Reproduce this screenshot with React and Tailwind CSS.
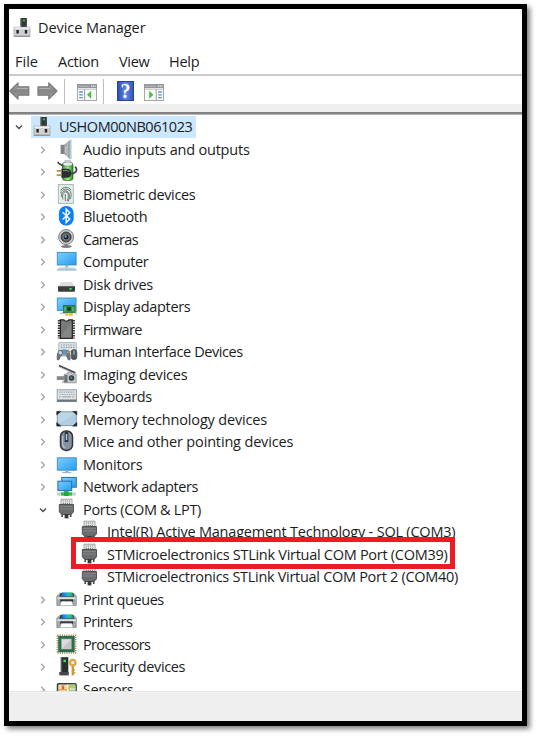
import React from 'react';

function Svg({ children, className = '' }) {
  return (
    <svg viewBox="0 0 22 22" className={`h-[22px] w-[22px] shrink-0 overflow-visible ${className}`}>
      {children}
    </svg>
  );
}

function Gradients() {
  return (
    <svg className="absolute h-0 w-0">
      <defs>
        <linearGradient id="screen" x1="0" y1="0" x2="1" y2="1">
          <stop offset="0" stopColor="#7cd0ff" />
          <stop offset="1" stopColor="#269cf0" />
        </linearGradient>
        <linearGradient id="steel" x1="0" y1="0" x2="1" y2="0">
          <stop offset="0" stopColor="#8b9196" />
          <stop offset="0.6" stopColor="#b9bec2" />
          <stop offset="1" stopColor="#6c7276" />
        </linearGradient>
        <linearGradient id="battery" x1="0" y1="0" x2="1" y2="0">
          <stop offset="0" stopColor="#2e9b22" />
          <stop offset="0.5" stopColor="#a5f07c" />
          <stop offset="1" stopColor="#238a1c" />
        </linearGradient>
        <linearGradient id="printBlue" x1="0" y1="0" x2="1" y2="0">
          <stop offset="0" stopColor="#1565d8" />
          <stop offset="0.5" stopColor="#16b6e8" />
          <stop offset="0.75" stopColor="#35c746" />
          <stop offset="1" stopColor="#1e7fe0" />
        </linearGradient>
        <linearGradient id="arrow" x1="0" y1="0" x2="0" y2="1">
          <stop offset="0" stopColor="#a9a9a9" />
          <stop offset="0.5" stopColor="#858585" />
          <stop offset="1" stopColor="#a3a3a3" />
        </linearGradient>
      </defs>
    </svg>
  );
}

const Computer = () => (
  <Svg>
    <path d="M9.3 1h6.4v9.7H9.3z" fill="#55595c" />
    <path d="M10.8 1h4.9v9.7h-4.9z" fill="#34383a" />
    <circle cx="13" cy="3.4" r="1.1" fill="#2fc52d" />
    <path d="M3 10.2h16v9.3H3z" fill="#d0d1d3" stroke="#9fa2a5" strokeWidth=".7" />
    <path d="M3.4 10.4h15.2v1.6H3.4z" fill="#f0f0f0" />
    <path d="M5.4 13h2.4v3.6H5.4zM13.8 13h2.4v3.6h-2.4z" fill="#242424" />
    <path d="M3 18.6h16v1.2H3z" fill="#8d9093" />
  </Svg>
);

const Audio = () => (
  <Svg>
    <path d="M4.6 5.8h4v9.2h-4z" fill="#7d8387" />
    <path d="M8.2 5.8 13.8 1v19l-5.6-5z" fill="url(#steel)" />
    <path d="M13.6.6h2v19.8h-2z" fill="#b3cddb" />
    <path d="M9.7 7.2v7" stroke="#d2d5d7" strokeWidth=".8" />
  </Svg>
);

const Battery = () => (
  <Svg>
    <path d="M8.8 -.4h5.6v3H8.8z" fill="#eef0f1" stroke="#9a9fa2" strokeWidth=".6" />
    <rect x="6.4" y="1.6" width="10.6" height="17.8" rx="2.6" fill="url(#battery)" stroke="#245c23" strokeWidth=".7" />
    <ellipse cx="11.7" cy="3" rx="4.8" ry="2.1" fill="#e6eeea" stroke="#59705c" strokeWidth=".5" />
    <path d="M2 .8C2 4 5.5 2.6 7 5.4M14.4 12.4c6.4.4 7.4-4.4 4.6-6.8" fill="none" stroke="#3c4144" strokeWidth="1.6" />
    <path d="M5.4 7.8h5c3.6 0 4.8 2 4.8 4.4 0 2.7-1.4 4.6-4.8 4.6h-5z" fill="#2b2e30" />
    <path d="M7 9.6h4c1.2 0 2 .6 2.4 1.4" stroke="#858b8f" fill="none" />
    <path d="M.7 9.8h4.8M.7 14.2h4.8" stroke="#b98f3a" strokeWidth="1.7" />
  </Svg>
);

const Biometric = () => (
  <Svg>
    <rect x="2.3" y=".6" width="15" height="18.8" fill="#e4eeeb" stroke="#9db5af" strokeWidth=".9" />
    <g fill="none" stroke="#636e6c" strokeWidth=".95">
      <path d="M4.8 6.3c2-4 8.2-4 10.2 0M4.6 9.2C5.7 3.8 14 3.8 15 9.2c.3 2 0 4-.8 5.8M5.4 12.8c-.4-8 8.6-8 8 0-.1 1.8-.5 3.3-1 4.6M7 15.4c-.8-2.8-.8-7.3 2.7-7.4 4 .2 2.7 6 1.4 9.3M9.3 10v7" />
    </g>
  </Svg>
);

const Bluetooth = () => (
  <Svg>
    <rect x="2.9" y="0" width="14.8" height="19.6" rx="7" fill="#0a80f5" />
    <path d="m6.6 6.2 7.2 6.8-3.6 3.5V3.2l3.6 3.5-7.2 6.7" fill="none" stroke="#fff" strokeWidth="1.4" />
  </Svg>
);

const Camera = () => (
  <Svg>
    <path d="M8.6 14h3v3.4h-3z" fill="#777" />
    <ellipse cx="10.2" cy="17.6" rx="5.3" ry="1.4" fill="#77797b" />
    <circle cx="10.1" cy="8" r="7.5" fill="#c9cbcd" stroke="#808284" />
    <circle cx="10.1" cy="8" r="5" fill="#5a5e61" stroke="#303336" strokeWidth=".9" />
    <circle cx="10.1" cy="8" r="3" fill="#1b222a" stroke="#8a929a" strokeWidth=".8" />
    <circle cx="9.6" cy="7.4" r="1.1" fill="#86b7de" />
  </Svg>
);

const Desktop = () => (
  <Svg>
    <rect x="1.3" y="1.4" width="18.8" height="12.6" fill="url(#screen)" stroke="#3f8abf" strokeWidth=".9" />
    <path d="M9.2 14.2h3v2.6h-3z" fill="#9fb3c0" />
    <path d="M3 16.6h15.5l2.2 2.6H.8z" fill="#bcd3e2" />
    <path d="M.8 19h20" stroke="#8fabbd" strokeWidth=".8" />
  </Svg>
);

const Disk = () => (
  <Svg>
    <path d="M5 8h11l2.8 4.6H2.2z" fill="#dcdddd" />
    <rect x="2" y="12" width="17" height="5.8" rx="1" fill="#393b3d" />
    <path d="M2.8 12.6h15.4" stroke="#6d7072" strokeWidth=".8" />
    <path d="M13.4 14h2.3v1.8h-2.3z" fill="#39e03b" />
  </Svg>
);

const Display = () => (
  <Svg>
    <rect x="1.3" y="2" width="18.8" height="12.4" fill="url(#screen)" stroke="#3f8abf" strokeWidth=".9" />
    <path d="M4 17.2h5" stroke="#a9bcc8" strokeWidth="1.2" />
    <rect x="7.6" y="9.4" width="12" height="7.4" fill="#2f9150" stroke="#175d30" strokeWidth=".6" />
    <path d="M11.2 11.2h3.7v3.5h-3.7z" fill="#173c28" />
    <path d="M9 11v4.3M17 11v4.3" stroke="#8bd39a" strokeWidth=".8" />
    <path d="M20.2 7.6v11" stroke="#b5bbbe" strokeWidth="1.1" />
    <path d="M9.4 17.2h7.4v2.5H9.4z" fill="#f1b62b" />
    <path d="M12.4 17v3" stroke="#fff" strokeWidth=".7" />
  </Svg>
);

const Firmware = () => (
  <Svg>
    <path d="M3.2 1v18.4M17.5 1v18.4" stroke="#373737" strokeWidth="2.8" strokeDasharray="1.6 .9" />
    <path d="M4.4.8h3.5c.5 1.8 4.4 1.8 5 0h3.4v18.5H4.4z" fill="#77797a" stroke="#272829" strokeWidth="1.3" />
    <path d="M5.2 17 15.4 4v14.4H5.2z" fill="#8d8f90" opacity=".6" />
  </Svg>
);

const Hid = () => (
  <Svg>
    <rect x="2.8" y="1.6" width="17.4" height="9" rx=".6" fill="#dfe4e7" stroke="#a3abb1" strokeWidth=".9" />
    <path d="M5 4h13.4M5 6.4h13.4" stroke="#8d979e" strokeWidth="1.1" strokeDasharray="1.4 1" />
    <path d="M3.2 9.2c2.4-.9 6.8-.9 9.2 0 1.6.9 2.2 5 2.1 8.6 0 2-2.2 2.2-3.1.3l-1.2-2.8H5l-1.2 2.8c-.9 1.9-3 1.6-3.1-.3-.1-3.4.7-7.7 2.5-8.6z" fill="#69737a" />
    <circle cx="4.3" cy="11.8" r="1.7" fill="#cfd7db" />
    <path d="M6.6 9.2h3.6v3.4H6.6z" fill="#37a6ee" />
    <circle cx="11.8" cy="11.4" r="1.2" fill="#f08a3c" />
    <path d="M6 14h4.4" stroke="#bac4ca" strokeWidth="1.2" />
    <rect x="15.2" y="8.6" width="5.6" height="10" rx="2.6" fill="#4d5a64" stroke="#333d45" strokeWidth=".6" />
    <path d="M18 9.6v4" stroke="#c6ced3" />
  </Svg>
);

const Imaging = () => (
  <Svg>
    <path d="M2.9 1.7 19.3 8.8" stroke="#484c4f" strokeWidth="2" />
    <path d="m3.5 2.8 14 6.4" stroke="#a6aaac" strokeWidth=".8" />
    <path d="M.8 12.2h8.5v3.8H.8z" fill="#85898b" />
    <path d="M6 17.8h13" stroke="#a7acae" strokeWidth="1.4" />
    <path d="M8.2 10.2h2.3l1-1.8h3.8l1 1.8h3.9v8.6h-12z" fill="#c2c4c5" stroke="#85898b" strokeWidth=".7" />
    <path d="M8.4 11h3v7.4h-3z" fill="#6d7274" />
    <circle cx="15.5" cy="14" r="2.7" fill="#33383b" />
    <circle cx="15.3" cy="13.8" r="1.2" fill="#38959f" />
  </Svg>
);

const Keyboard = () => (
  <Svg>
    <rect x="1.2" y="3.8" width="19.2" height="11.8" fill="#e2e6e8" stroke="#8d979e" strokeWidth=".9" />
    <path d="M1.2 13.5h19.2v2.2H1.2z" fill="#69747c" />
    <path d="M3 6.2h16M3.7 8.5h15M3 10.8h2.5M16.2 10.8H19" stroke="#9ca6ac" strokeWidth="1.2" strokeDasharray="1.5 .8" />
    <path d="M6.3 10.8h9" stroke="#9ca6ac" strokeWidth="1.2" />
  </Svg>
);

const Memory = () => (
  <Svg>
    <rect x="1.3" y="2.8" width="19" height="13.8" rx="1.2" fill="#bdd7e8" stroke="#8398a5" />
    <path d="M2 15.8 19.8 4v11.8z" fill="#a2c2d8" opacity=".5" />
    <path d="M.8 5.8V2.4h4zM16.8 2.4h4v3.4zM.8 13.6v3.5h4zM20.8 13.6v3.5h-4z" fill="#22282c" stroke="#22282c" strokeWidth=".7" />
  </Svg>
);

const Mouse = () => (
  <Svg>
    <rect x="4.5" y="0" width="12" height="19.4" rx="5.5" fill="#8591a0" stroke="#30353a" strokeWidth="1.5" />
    <path d="M6.6 5v8c0 2 1.2 3.4 2.6 3.9" fill="none" stroke="#b4bec8" strokeWidth="1.2" />
    <path d="M10.5.6v10.4" stroke="#30353a" strokeWidth="3.6" />
    <path d="M10.5 3v6" stroke="#a9c9e9" strokeWidth="1.5" />
  </Svg>
);

const Monitor = () => (
  <Svg>
    <rect x="1.3" y="3.8" width="19" height="12.4" fill="url(#screen)" stroke="#3f8abf" strokeWidth=".9" />
    <path d="M9.3 16.7h3v1.6h-3z" fill="#92adbe" />
    <path d="M6.3 18.6h9" stroke="#9db3c0" strokeWidth="1.1" />
  </Svg>
);

const Network = () => (
  <Svg>
    <rect x="5.8" y="1.4" width="14.5" height="9.8" fill="url(#screen)" stroke="#266ea7" />
    <rect x="1.9" y="5.2" width="13.8" height="9.4" fill="url(#screen)" stroke="#266ea7" />
    <path d="M1 18h18.8" stroke="#c6d0d4" strokeWidth="3.2" />
    <path d="M5 18h11" stroke="#35be45" strokeWidth="3.2" />
    <path d="M8 15.2h4.6v4.8H8z" fill="#20a838" />
  </Svg>
);

const Port = () => (
  <Svg>
    <path d="M5 .2h11v6H5z" fill="#efefef" stroke="#8b8d8e" strokeWidth=".8" />
    <path d="M6.6 2h8M6.6 4.3h8" stroke="#7c7f80" strokeWidth="1.2" strokeDasharray="1.3 .8" />
    <path d="M3.3 5.5h14.2v7.4l-2.4 2.6H5.8l-2.5-2.6z" fill="#6a6d6e" stroke="#3d3f40" strokeWidth=".8" />
    <path d="M4 7.6h12.8M4 10h12.8" stroke="#8a8d8e" strokeWidth=".8" />
    <path d="M8.6 15h3.8v4.4H8.6z" fill="#37393a" />
    <path d="M6.2 14.5V18M14.7 14.5V18" stroke="#4e5152" strokeWidth="1.7" />
  </Svg>
);

const Printer = () => (
  <Svg>
    <path d="M4.3 4.1h13.2l2.8 3v9.4h-3l-1.2-4.3H5l-1.2 4.3h-3V7.1z" fill="#a4abb0" stroke="#70787d" strokeWidth=".6" />
    <path d="M4.6 4h12.5l1.2 3.8H3.2z" fill="#353c41" />
    <path d="M6.2 3.6h10l.9 3.6H5.4z" fill="url(#printBlue)" />
    <path d="M1.5 8.3h18.2v1.9H1.5z" fill="#dce0e2" />
    <path d="M4.2 10.4h13v2.3h-13z" fill="#25292c" />
    <path d="M5.5 12.2h10.2l1.6 4.4H3.8z" fill="#fff" stroke="#89929a" strokeWidth=".6" />
  </Svg>
);

const Processor = () => (
  <Svg>
    <rect x="1.4" y="1.2" width="18.2" height="17.8" fill="none" stroke="#a68b49" strokeWidth="1.5" strokeDasharray="1.2 1" />
    <rect x="2.2" y="2" width="16.5" height="16.2" fill="#2a6d4e" />
    <rect x="5.5" y="5" width="9.8" height="10" fill="#dcdddc" stroke="#a2aaa6" strokeWidth=".6" />
    <path d="m6 14.6 9-9v9z" fill="#c3c6c4" />
  </Svg>
);

const Security = () => (
  <Svg>
    <path d="M4.8 1.2h7.5v15H4.8z" fill="#2b2e30" />
    <path d="M4.8 1.2h1.3v15H4.8z" fill="#5c6063" />
    <path d="M7.4 3.6h2.6v2.6H7.4z" fill="#31e54a" />
    <path d="M3.3 16h9.5v3.4H3.3z" fill="#44484b" />
    <path d="M16.8 9v10.4" stroke="#cf9636" strokeWidth="2.4" />
    <path d="M17 14h2.2M17 16.8h2.4" stroke="#d6a044" strokeWidth="1.4" />
    <circle cx="16.8" cy="6.6" r="2.7" fill="#fff" stroke="#dfa747" strokeWidth="2.4" />
  </Svg>
);

const Sensor = () => (
  <Svg>
    <rect x="1.5" y="4.7" width="18.6" height="14" rx="1" fill="#e5e3a4" stroke="#3c3e40" strokeWidth="1.5" />
    <path d="M13 5.5h6.4v12H13z" fill="#a9cf86" />
    <path d="M3 10.6h8l4-4" stroke="#e9a640" strokeWidth="1.2" fill="none" />
    <path d="M5.8 6.6h2.4v3.6H5.8z" fill="#e25a50" />
    <path d="M11.6 5.3v12M14 10h5.5" stroke="#f4f3e6" />
  </Svg>
);

const Chevron = ({ open }) => (
  <svg viewBox="0 0 10 10" className="h-[10px] w-[10px] shrink-0" fill="none">
    {open ? (
      <path d="m2 3.6 3 3 3-3" stroke="#4a4a4a" strokeWidth="1.4" />
    ) : (
      <path d="M3.2 1.8 6.4 5 3.2 8.2" stroke="#a6a6a6" strokeWidth="1.4" />
    )}
  </svg>
);

const before = [
  ['Audio inputs and outputs', Audio, 'tracking-[-0.2px]'],
  ['Batteries', Battery, 'tracking-[-0.5px]'],
  ['Biometric devices', Biometric, 'tracking-[-0.38px]'],
  ['Bluetooth', Bluetooth, 'tracking-[-0.26px]'],
  ['Cameras', Camera, 'tracking-[-0.68px]'],
  ['Computer', Desktop, 'tracking-[-0.38px]'],
  ['Disk drives', Disk, 'tracking-[-0.3px]'],
  ['Display adapters', Display, 'tracking-[-0.33px]'],
  ['Firmware', Firmware, 'tracking-[-0.65px]'],
  ['Human Interface Devices', Hid, 'tracking-[-0.41px]'],
  ['Imaging devices', Imaging, 'tracking-[-0.2px]'],
  ['Keyboards', Keyboard, 'tracking-[-0.3px]'],
  ['Memory technology devices', Memory, 'tracking-[-0.17px]'],
  ['Mice and other pointing devices', Mouse, 'tracking-[-0.16px]'],
  ['Monitors', Monitor, 'tracking-[-0.2px]'],
  ['Network adapters', Network, 'tracking-[-0.4px]'],
];

const after = [
  ['Print queues', Printer, 'tracking-[-0.43px]'],
  ['Printers', Printer, 'tracking-[-0.5px]'],
  ['Processors', Processor, 'tracking-[-0.66px]'],
  ['Security devices', Security, 'tracking-[-0.34px]'],
  ['Sensors', Sensor, 'tracking-[-0.45px]'],
];

function Category({ label, Icon, tracking, open = false }) {
  return (
    <div className="flex h-[22.5px] items-center pl-[28.5px]">
      <Chevron open={open} />
      <span className="ml-[8.5px] flex"><Icon /></span>
      <span className={`ml-[5px] ${tracking}`}>{label}</span>
    </div>
  );
}

function PortRow({ tracking, children }) {
  return (
    <div className="flex h-[22.5px] items-center pl-[70px]">
      <Port />
      <span className={`ml-[6px] ${tracking}`}>{children}</span>
    </div>
  );
}

function PanelIcon({ flip }) {
  return (
    <svg viewBox="0 0 20 17" className="h-[17px] w-[20px] shrink-0">
      <rect x=".5" y=".5" width="19" height="16" fill="#fafafa" stroke="#a5a8aa" />
      <path d="M0 0h20v4.2H0z" fill="#93979a" />
      <path d="M1 2.2h11" stroke="#b9bdbf" />
      <path d="M14 2.2h4.6" stroke="#f2f2f2" strokeWidth="1.2" strokeDasharray="1.2 .6" />
      <path d="M1 5.4h18" stroke="#c9ccce" />
      {flip ? (
        <>
          <path d="M12.2 5.5v11" stroke="#9da0a2" />
          <path d="M14.2 8h3.6M14.2 10.8h3.6M14.2 13.6h3.6" stroke="#5b92bd" strokeWidth="1.3" />
          <path d="m5.2 6.8 4.2 4-4.2 4z" fill="#4cc13a" />
        </>
      ) : (
        <>
          <path d="M7.6 5.5v11" stroke="#9da0a2" />
          <path d="M2.2 8h3.6M2.2 10.8h3.6M2.2 13.6h3.6" stroke="#5b92bd" strokeWidth="1.3" />
          <path d="m14.2 6.8-4.2 4 4.2 4z" fill="#4cc13a" />
        </>
      )}
    </svg>
  );
}

function Arrow({ forward }) {
  return (
    <svg viewBox="0 0 21 20" className="h-5 w-[21px] shrink-0">
      <path
        d={forward ? 'M20 10 11.8 1.8v4H1v8.4h10.8v4z' : 'M.8 10 9 1.8v4h10.8v8.4H9v4z'}
        fill="url(#arrow)"
        stroke="#7a7a7a"
        strokeWidth="1.2"
        strokeLinejoin="round"
      />
      <path d={forward ? 'M2.2 7.4h11' : 'M7.8 7.4h11'} stroke="#bdbdbd" strokeWidth=".8" />
    </svg>
  );
}

export default function App() {
  return (
    <div className="h-[737px] w-[538px] overflow-hidden bg-white pl-1 pt-1 font-['Open_Sans','Noto_Sans',sans-serif] text-[14.5px] leading-[20px] tracking-[-0.28px] text-[#1c1c1c]">
      <Gradients />
      <div className="flex h-[722px] w-[523px] flex-col border-[5px] border-black bg-white shadow-[3px_3px_5px_0px_rgba(0,0,0,0.5)]">
        <header className="flex h-[38px] shrink-0 items-center pl-[2px]">
          <Computer />
          <span className="ml-[5px] tracking-[-0.06px]">Device Manager</span>
        </header>
        <nav className="flex h-[27px] shrink-0 items-center pt-[2px]">
          <span className="w-[42px] pl-[6px] tracking-[0px]">File</span>
          <span className="w-[61px] pl-[7px]">Action</span>
          <span className="w-[50px] pl-[7px]">View</span>
          <span className="pl-[7px]">Help</span>
        </nav>
        <div className="h-[2px] shrink-0 bg-[#cbcbcd]" />
        <div className="flex h-[28px] shrink-0 items-center pt-[2px]">
          <Arrow />
          <span className="ml-[7px] flex"><Arrow forward /></span>
          <span className="ml-[6px] h-[25px] w-px bg-[#bdbdbd]" />
          <span className="ml-[12px] flex pt-[3px]"><PanelIcon /></span>
          <span className="ml-[6px] h-[25px] w-px bg-[#bdbdbd]" />
          <span className="ml-[13px] flex h-[20px] w-[17px] items-center justify-center border border-[#2a4391] bg-linear-to-r from-[#2f4fb4] via-[#5f86e2] to-[#3558c0] font-['Liberation_Serif',serif] text-[20px] font-bold tracking-normal text-white">
            ?
          </span>
          <span className="ml-[10px] flex pt-[3px]"><PanelIcon flip /></span>
        </div>
        <div className="h-[8px] shrink-0 bg-[#efefef]" />
        <div className="h-[3px] shrink-0 border-b border-[#b5b5b5] bg-[#828282]" />
        <main className="relative h-[576px] shrink-0 overflow-hidden pt-[0.75px]">
          <div className="flex h-[22.5px] items-center pl-[4.5px]">
            <Chevron open />
            <div className="ml-[7.5px] flex h-[22px] items-center bg-[#cce8ff] pr-[4px]">
              <Computer />
              <span className="ml-[6px] tracking-[-0.45px]">USHOM00NB061023</span>
            </div>
          </div>
          {before.map(([label, Icon, tracking]) => (
            <Category key={label} label={label} Icon={Icon} tracking={tracking} />
          ))}
          <Category label="Ports (COM & LPT)" Icon={Port} tracking="tracking-[-0.33px]" open />
          <PortRow tracking="tracking-[-0.21px]">Intel(R) Active Management Technology - SOL (COM3)</PortRow>
          <PortRow tracking="tracking-[-0.28px]">STMicroelectronics STLink Virtual COM Port (COM39)</PortRow>
          <PortRow tracking="tracking-[-0.3px]">STMicroelectronics STLink Virtual COM Port 2 (COM40)</PortRow>
          {after.map(([label, Icon, tracking]) => (
            <Category key={label} label={label} Icon={Icon} tracking={tracking} />
          ))}
          <div className="absolute left-[62px] top-[422px] h-[32px] w-[384px] border-[5px] border-[#ed1c24]" />
        </main>
        <div className="h-[2px] shrink-0 border-t border-[#e1e1e1] bg-[#f8f8f8]" />
        <footer className="flex-1 bg-[#efefef]" />
      </div>
    </div>
  );
}
